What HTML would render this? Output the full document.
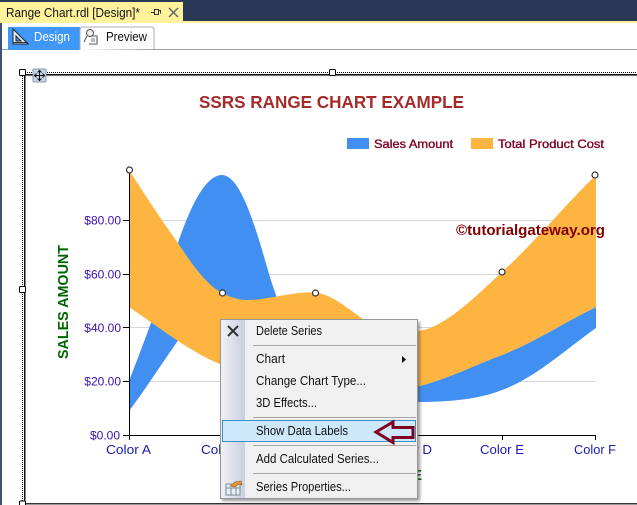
<!DOCTYPE html>
<html><head><meta charset="utf-8"><style>
html,body{margin:0;padding:0;background:#fff}
body{width:637px;height:505px;overflow:hidden}
svg{display:block}
text{font-family:"Liberation Sans",sans-serif}
</style></head><body>
<svg width="637" height="505" viewBox="0 0 637 505" xmlns="http://www.w3.org/2000/svg" shape-rendering="geometricPrecision">
<defs>
<linearGradient id="gut" x1="0" x2="1" y1="0" y2="0"><stop offset="0" stop-color="#f1f1f5"/><stop offset="1" stop-color="#c9cfe0"/></linearGradient>
<filter id="sh" x="-5%" y="-5%" width="115%" height="115%"><feGaussianBlur stdDeviation="1.6"/></filter>
</defs>
<rect width="637" height="505" fill="#fff"/>
<rect width="637" height="21" fill="#293955"/>
<rect y="21" width="637" height="2" fill="#fff29d"/>
<rect y="2" width="183" height="21" fill="#fff29d"/>
<text x="6" y="17" font-size="13" fill="#111" textLength="134" lengthAdjust="spacingAndGlyphs">Range Chart.rdl [Design]*</text>
<path d="M151 12.500h3M154.500 9.500v5h4v-5zM158.500 10.500h2v3" fill="none" stroke="#333" stroke-width="1"/>
<path d="M169 8l9 9M178 8l-9 9" stroke="#666" stroke-width="1.500"/>
<rect x="0" y="23" width="2" height="482" fill="#3d5078"/>
<rect x="2" y="49" width="635" height="1" fill="#9ca0ab"/>
<rect x="8" y="27" width="72" height="23" fill="#3f97f7"/>
<path d="M13 29v15h15zM16 36v5h5z" fill="#e8eef5" fill-rule="evenodd" stroke="#223" stroke-width="1"/>
<path d="M13 43h15v-1H13z" fill="#333"/>
<text x="34" y="41" font-size="12.500" fill="#fff" textLength="36" lengthAdjust="spacingAndGlyphs">Design</text>
<path d="M80 50V30q0-3 3-3h68q3 0 3 3v19" fill="#fff" stroke="#a9adb5"/>
<rect x="81" y="50" width="73" height="1" fill="#fff"/>
<circle cx="90" cy="33" r="3.500" fill="#eee" stroke="#555"/>
<path d="M87 36l-3 6M92 36h5v8h-8" fill="none" stroke="#555"/>
<path d="M91 39h4M91 41h4" stroke="#777"/>
<text x="106" y="41" font-size="12.500" fill="#111" textLength="41" lengthAdjust="spacingAndGlyphs">Preview</text>

<!-- report frame -->
<path d="M23 72.500H637" stroke="#000" stroke-dasharray="1 1"/>
<path d="M22.500 72V505" stroke="#000" stroke-dasharray="1 1"/>
<rect x="24" y="74" width="613" height="1.500" fill="#111"/>
<rect x="25" y="75.500" width="612" height="1" fill="#ddd"/>
<rect x="24" y="74" width="1.500" height="431" fill="#111"/>
<rect x="24" y="503" width="613" height="1.500" fill="#333"/>
<rect x="19.500" y="69.500" width="6" height="6" rx="1" fill="#fff" stroke="#000"/>
<rect x="329.500" y="69.500" width="6" height="6" rx="1" fill="#fff" stroke="#000"/>
<rect x="19.500" y="286.500" width="6" height="6" rx="1" fill="#fff" stroke="#000"/>
<rect x="19.500" y="501" width="6" height="6" rx="1" fill="#fff" stroke="#000"/>
<rect x="33" y="69" width="13" height="13" rx="1" fill="#c5d5ea" stroke="#8a97aa"/>
<path d="M39.500 71v9M35 75.500h9M37.500 72.500l2-2 2 2M37.500 78.500l2 2 2-2M36.500 73.500l-2 2 2 2M42.500 73.500l2 2-2 2" fill="none" stroke="#111"/>

<!-- title & legend -->
<text x="199" y="108" font-size="17.500" font-weight="bold" fill="#a52a2a" textLength="265" lengthAdjust="spacingAndGlyphs">SSRS RANGE CHART EXAMPLE</text>
<rect x="347" y="138" width="22" height="11" fill="#418ff0"/>
<text x="374" y="148" font-size="12" fill="#800020" stroke="#800020" stroke-width=".35" textLength="79" lengthAdjust="spacingAndGlyphs">Sales Amount</text>
<rect x="471" y="138" width="22" height="11" fill="#fdb441"/>
<text x="498" y="148" font-size="12" fill="#800020" stroke="#800020" stroke-width=".35" textLength="106" lengthAdjust="spacingAndGlyphs">Total Product Cost</text>

<!-- grid -->
<g stroke="#d6d6e0" stroke-width="1">
<path d="M129 220.500H596M129 274.500H596M129 327.500H596M129 381.500H596"/>
</g>

<!-- blue range -->
<path d="M129 381C145 340 160 300 178 243C190 208 205 175 222 175C240 175 255 225 267 267C274 292 290 340 320 370C350 395 385 386 420 386C450 378 475 365 502 355C535 342 565 322 596 307V328C565 350 535 378 502 390C480 399 450 402 418 402C380 402 330 395 300 385C260 360 205 290 177 342C160 366 145 390 129 411Z" fill="#418ff0"/>
<!-- orange range -->
<path d="M129 170C145 195 160 218 178 243C193 266 207 285 222 293C232 298 240 300 247 300C258 300 266 298 274 297C290 294 303 292 315 292.500C330 294 345 306 360 317C385 334 410 335 430 328C455 318 480 292 502 272C535 242 565 205 596 175V307C565 322 535 342 502 355C475 365 450 378 420 386C385 392 350 388 320 384C290 380 250 375 222 365C190 352 160 328 129 307Z" fill="#fdb441"/>

<!-- axes -->
<path d="M129.500 170V435.500H596" fill="none" stroke="#000" stroke-width="1"/>
<path d="M123 220.500h6M123 274.500h6M123 327.500h6M123 381.500h6M123 435.500h6M129.500 435v5M222.500 435v5M315.500 435v5M409.500 435v5M502.500 435v5M595.500 435v5" stroke="#000"/>
<g font-size="12" fill="#3a12b0" text-anchor="end">
<text x="121" y="224.500">$80.00</text>
<text x="121" y="278.500">$60.00</text>
<text x="121" y="332">$40.00</text>
<text x="121" y="385.500">$20.00</text>
<text x="120" y="439.500">$0.00</text>
</g>
<g font-size="12.500" fill="#1a1ab0">
<text x="106" y="454" textLength="45" lengthAdjust="spacingAndGlyphs">Color A</text>
<text x="201" y="454" textLength="45" lengthAdjust="spacingAndGlyphs">Color B</text>
<text x="387" y="454" textLength="45" lengthAdjust="spacingAndGlyphs">Color D</text>
<text x="480" y="454" textLength="44" lengthAdjust="spacingAndGlyphs">Color E</text>
<text x="574" y="454" textLength="42" lengthAdjust="spacingAndGlyphs">Color F</text>
</g>
<text transform="translate(68 359) rotate(-90)" font-size="15" font-weight="bold" fill="#006400" textLength="114" lengthAdjust="spacingAndGlyphs">SALES AMOUNT</text>
<text x="412" y="480" font-size="15" font-weight="bold" fill="#006400">E</text>
<text x="456" y="235" font-size="14.500" font-weight="bold" fill="#800000" textLength="149" lengthAdjust="spacingAndGlyphs">©tutorialgateway.org</text>

<g fill="#fff" stroke="#333" stroke-width="1.200">
<circle cx="129.500" cy="170" r="3"/><circle cx="222.500" cy="293" r="3"/><circle cx="315.500" cy="293" r="3"/><circle cx="502" cy="272" r="3"/><circle cx="595" cy="175" r="3"/>
</g>

<!-- context menu -->
<rect x="222" y="322" width="198" height="179" fill="#444" opacity=".55" filter="url(#sh)"/>
<rect x="220.500" y="319.500" width="197" height="179" fill="#f0f0f0" stroke="#979797"/>
<rect x="221" y="320" width="24" height="178" fill="url(#gut)"/>
<path d="M228 326l10 10M238 326l-10 10" stroke="#333" stroke-width="2"/>
<g stroke="#a8a8a8"><path d="M253 345.500H416M253 417.500H416M253 445.500H416M253 473.500H416"/></g>
<rect x="222.500" y="420.500" width="193" height="21" fill="#cde8fb" stroke="#3d8ec4"/>
<g font-size="12.500" fill="#111">
<text x="256" y="335" textLength="66" lengthAdjust="spacingAndGlyphs">Delete Series</text>
<text x="256" y="363" textLength="29" lengthAdjust="spacingAndGlyphs">Chart</text>
<text x="256" y="385" textLength="110" lengthAdjust="spacingAndGlyphs">Change Chart Type...</text>
<text x="256" y="407" textLength="61" lengthAdjust="spacingAndGlyphs">3D Effects...</text>
<text x="256" y="435" textLength="92" lengthAdjust="spacingAndGlyphs">Show Data Labels</text>
<text x="256" y="463" textLength="123" lengthAdjust="spacingAndGlyphs">Add Calculated Series...</text>
<text x="256" y="491" textLength="95" lengthAdjust="spacingAndGlyphs">Series Properties...</text>
</g>
<path d="M402 356l4 3.500-4 3.500z" fill="#111"/>
<rect x="226" y="484" width="14" height="11" fill="#e8eef5" stroke="#7d8a99"/>
<path d="M226 488h14M231 488v7M236 488v7" stroke="#7d8a99"/>
<path d="M230 486l5-4 6-1 1 4-3-1-4 3z" fill="#e09a3a" stroke="#8a5a18" stroke-width=".6"/>
<path d="M376 432l17-10v5.500h20v10h-20v5z" fill="#cde8fb" stroke="#800020" stroke-width="3" stroke-linejoin="miter"/>
</svg>
</body></html>
